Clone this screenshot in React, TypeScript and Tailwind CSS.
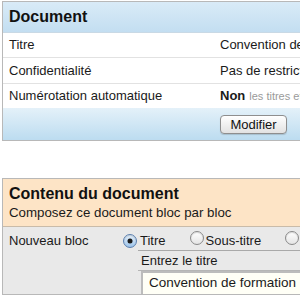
import React from "react";

function Radio({ checked }: { checked?: boolean }) {
  return (
    <span
      className={
        "relative inline-block w-[14px] h-[14px] rounded-full border shrink-0 shadow-[inset_0_1px_1px_rgba(0,0,0,0.15)] " +
        (checked
          ? "border-[#5b7fae] bg-gradient-to-b from-[#e6f1fb] to-[#9cc3ea]"
          : "border-[#8a8a8a] bg-gradient-to-b from-[#ffffff] to-[#e4e4e4]")
      }
    >
      {checked && (
        <span className="absolute left-1/2 top-1/2 -translate-x-1/2 -translate-y-1/2 w-[5px] h-[5px] rounded-full bg-[#1a1a1a]" />
      )}
    </span>
  );
}

export default function App() {
  return (
    <div
      className="w-[300px] h-[300px] overflow-hidden bg-white pl-[2px] pt-[1px] text-[13px] text-[#1a1a1a] whitespace-nowrap"
      style={{ fontFamily: '"Liberation Sans", Arial, sans-serif' }}
    >
      {/* Panel 1 */}
      <div className="w-[340px] border border-[#b8b8b8] bg-white">
        <div className="h-[31px] flex items-center px-[6px] bg-gradient-to-b from-[#d9ebf7] to-[#c3def1] border-b border-[#c9d9e5]">
          <span className="text-[16px] font-bold text-[#111]">Document</span>
        </div>
        <div className="h-[25px] flex items-center border-b border-[#e2e2e2]">
          <span className="w-[217px] shrink-0 pl-[6px]">Titre</span>
          <span className="shrink-0">Convention de formation</span>
        </div>
        <div className="h-[26px] flex items-center border-b border-[#e2e2e2]">
          <span className="w-[217px] shrink-0 pl-[6px]">Confidentialité</span>
          <span className="shrink-0">Pas de restriction</span>
        </div>
        <div className="h-[24px] flex items-center">
          <span className="w-[217px] shrink-0 pl-[6px]">Numérotation automatique</span>
          <span className="font-bold shrink-0">Non</span>
          <span className="ml-[4px] shrink-0 text-[11px] text-[#9a9a9a]">les titres et</span>
        </div>
        <div className="h-[32px] flex items-center bg-gradient-to-b from-[#e4f1f9] to-[#bcdcf0]">
          <button className="ml-[217px] h-[19px] w-[67px] rounded-[4px] border border-[#8e8e8e] bg-gradient-to-b from-[#ffffff] to-[#e2e2e2] text-[13px] leading-none text-[#111] shadow-[0_1px_1px_rgba(0,0,0,0.15)]">
            Modifier
          </button>
        </div>
      </div>

      {/* Panel 2 */}
      <div className="mt-[37px] w-[340px] border border-[#b8b8b8] bg-[#e9e9e9]">
        <div className="h-[48px] flex flex-col justify-center px-[6px] bg-[#fde4c6] border-b border-[#c9bba9]">
          <span className="text-[16px] font-bold leading-[20px] text-[#111]">Contenu du document</span>
          <span className="text-[13.3px] leading-[18px]">Composez ce document bloc par bloc</span>
        </div>
        <div className="flex pt-[5px]">
          <span className="w-[120px] shrink-0 pl-[6px] leading-[18px]">Nouveau bloc</span>
          <div className="flex flex-col">
            <div className="flex items-center h-[18px]">
              <Radio checked />
              <span className="ml-[3px]">Titre</span>
              <span className="ml-[24px]"><Radio /></span>
              <span className="ml-[2px]">Sous-titre</span>
              <span className="ml-[24px]"><Radio /></span>
            </div>
            <div className="ml-[15px] w-[200px] border-t border-[#a9a9a9]">
              <div className="h-[20px] flex items-center pl-[3px] border-b border-[#b5b5b5]">Entrez le titre</div>
              <div className="ml-[3px] h-[23px] flex items-center pl-[6px] bg-[#fffff6] border-t-2 border-l-2 border-[#bcbcbc] text-[13.5px]">
                Convention de formation
              </div>
            </div>
          </div>
        </div>
      </div>
    </div>
  );
}
